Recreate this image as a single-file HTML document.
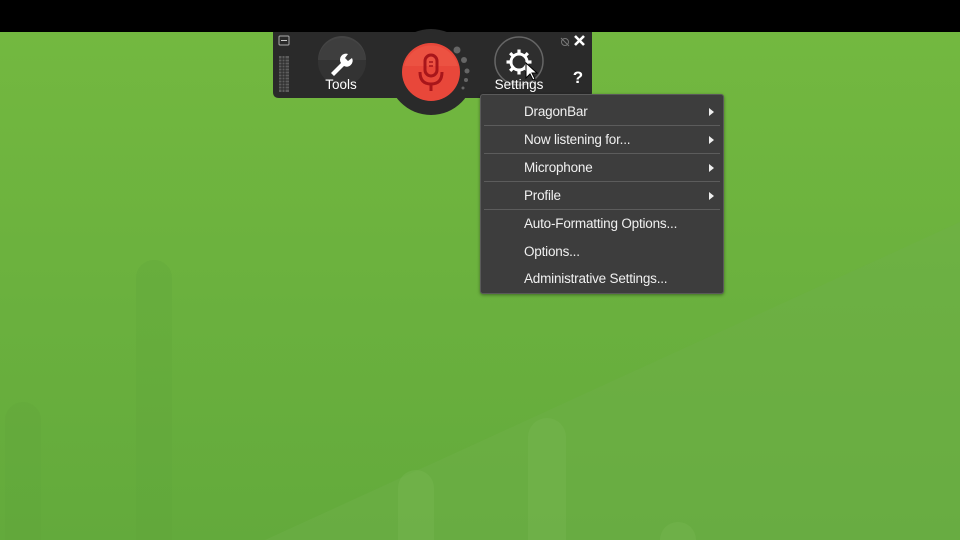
<!DOCTYPE html>
<html><head><meta charset="utf-8"><style>
*{margin:0;padding:0;box-sizing:border-box}
body{width:960px;height:540px;overflow:hidden;position:relative;font-family:"Liberation Sans",sans-serif;background:#6cb23d}
.abs{position:absolute}
.menu{left:480px;top:94px;width:244px;height:200px;background:#3d3d3d;border:1px solid #5a5a5a;border-radius:3px;box-shadow:0 1px 3px rgba(0,0,0,.4)}
.it{position:absolute;left:43px;color:#f0f0f0;font-size:13.5px;letter-spacing:-0.2px}
.sep{position:absolute;left:3px;right:3px;height:1px;background:#5c5c5c}
.ar{position:absolute;left:228px;width:0;height:0;border-top:4px solid transparent;border-bottom:4px solid transparent;border-left:5px solid #eee}
</style></head><body>
<svg class="abs" style="left:0;top:0" width="960" height="540">
<defs><linearGradient id="g" x1="0" y1="0" x2="0" y2="1"><stop offset="0" stop-color="#74b940"/><stop offset="1" stop-color="#63aa3c"/></linearGradient></defs>
<rect width="960" height="540" fill="url(#g)"/>
<polygon points="265,540 960,222 960,540" fill="#6fb04a" opacity=".45"/>
<g fill="#5fa43a" opacity=".3">
<rect x="5" y="402" width="36" height="160" rx="18"/>
<rect x="136" y="260" width="36" height="300" rx="18"/>
</g>
<g fill="#78b652" opacity=".4">
<rect x="528" y="418" width="38" height="140" rx="19"/>
<rect x="398" y="470" width="36" height="90" rx="18"/>
<rect x="660" y="522" width="36" height="40" rx="18"/>
</g>
<rect width="960" height="32" fill="#000"/>
<path d="M273,32 H592 V92 Q592,98 586,98 H279 Q273,98 273,92 Z" fill="#2a2a2a"/>
<circle cx="431" cy="72" r="43" fill="#2a2a2a"/>
<rect x="279" y="36" width="10" height="9" rx="1" fill="none" stroke="#aaa" stroke-width="1"/>
<line x1="281" y1="40.5" x2="287" y2="40.5" stroke="#ccc"/>
<rect x="279" y="56" width="10" height="36" fill="#6a6a6a" opacity=".8"/>
<g stroke="#2a2a2a" stroke-width="1"><line x1="279" y1="59" x2="289" y2="59"/><line x1="279" y1="62" x2="289" y2="62"/><line x1="279" y1="65" x2="289" y2="65"/><line x1="279" y1="68" x2="289" y2="68"/><line x1="279" y1="71" x2="289" y2="71"/><line x1="279" y1="74" x2="289" y2="74"/><line x1="279" y1="77" x2="289" y2="77"/><line x1="279" y1="80" x2="289" y2="80"/><line x1="279" y1="83" x2="289" y2="83"/><line x1="279" y1="86" x2="289" y2="86"/><line x1="279" y1="89" x2="289" y2="89"/><line x1="282" y1="56" x2="282" y2="92"/><line x1="285" y1="56" x2="285" y2="92"/></g>
<path d="M318,60 A24,24 0 0 1 366,60 Z" fill="#444"/>
<circle cx="342" cy="62" r="24" fill="#3a3a3a" opacity=".6"/>
<path d="M331,73 L341,63 A6,6 0 0 1 348,54 L345,58 L348,61 L352,58 A6,6 0 0 1 344,66 L334,76 Z" fill="#fff"/>
<text x="341" y="89" fill="#fff" font-size="13.5" text-anchor="middle">Tools</text>
<circle cx="431" cy="72" r="29" fill="#e8473a"/>
<path d="M404,66 A28,28 0 0 1 458,66 Z" fill="#ef5a48" opacity=".6"/>
<rect x="425" y="55" width="12" height="21" rx="6" fill="none" stroke="#a8151a" stroke-width="3"/>
<path d="M420,72 Q420,84 431,84 Q442,84 442,72" fill="none" stroke="#a8151a" stroke-width="3"/>
<line x1="431" y1="84" x2="431" y2="91" stroke="#a8151a" stroke-width="3"/>
<line x1="429" y1="62" x2="433" y2="62" stroke="#a8151a" stroke-width="1.5"/>
<line x1="429" y1="66" x2="433" y2="66" stroke="#a8151a" stroke-width="1.5"/>
<g fill="#666"><circle cx="457" cy="50" r="3.5"/><circle cx="464" cy="60" r="3"/><circle cx="467" cy="71" r="2.5"/><circle cx="466" cy="80" r="2"/><circle cx="463" cy="88" r="1.5"/></g>
<circle cx="519" cy="61" r="24" fill="#2e2e2e" stroke="#666" stroke-width="1.5"/>
<g transform="translate(519,62)">
<circle r="8" fill="none" stroke="#fff" stroke-width="3"/>
<g fill="#fff"><rect x="-1.6" y="-12.5" width="3.2" height="25"/><rect x="-1.6" y="-12.5" width="3.2" height="25" transform="rotate(45)"/><rect x="-1.6" y="-12.5" width="3.2" height="25" transform="rotate(90)"/><rect x="-1.6" y="-12.5" width="3.2" height="25" transform="rotate(135)"/></g>
<circle r="6.5" fill="#2e2e2e"/>
</g>
<path d="M526,63 L526,78 L530,74 L533,80 L535,79 L532,73 L537,73 Z" fill="#fff" stroke="#000" stroke-width="1"/>
<text x="519" y="89" fill="#fff" font-size="13.5" text-anchor="middle">Settings</text>
<circle cx="565" cy="42" r="3.5" fill="none" stroke="#777" stroke-width="1"/>
<line x1="561" y1="38" x2="569" y2="46" stroke="#777"/>
<path d="M575,36 L584,45 M584,36 L575,45" stroke="#fff" stroke-width="2.6"/>
<text x="578" y="83" fill="#fff" font-size="17" font-weight="bold" text-anchor="middle">?</text>
</svg>
<div class="abs menu">
<div class="it" style="top:9px">DragonBar</div><div class="ar" style="top:13px"></div>
<div class="sep" style="top:30px"></div>
<div class="it" style="top:37px">Now listening for...</div><div class="ar" style="top:41px"></div>
<div class="sep" style="top:58px"></div>
<div class="it" style="top:65px">Microphone</div><div class="ar" style="top:69px"></div>
<div class="sep" style="top:86px"></div>
<div class="it" style="top:93px">Profile</div><div class="ar" style="top:97px"></div>
<div class="sep" style="top:114px"></div>
<div class="it" style="top:121px">Auto-Formatting Options...</div>
<div class="it" style="top:149px">Options...</div>
<div class="it" style="top:176px">Administrative Settings...</div>
</div>
</body></html>
